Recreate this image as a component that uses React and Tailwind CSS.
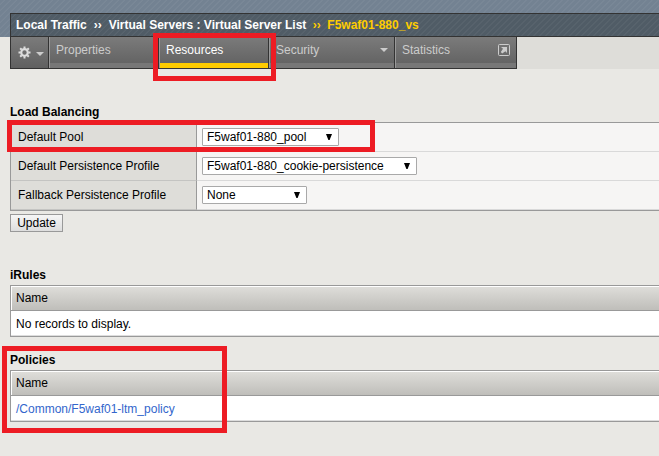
import React from 'react';

const stripes = 'bg-[repeating-linear-gradient(135deg,transparent_0px,transparent_2.4px,rgba(255,255,255,0.05)_3.2px,rgba(255,255,255,0.05)_3.6px,transparent_4.24px)]';

function Select({ width, children }) {
  return (
    <div className={`${width} ml-[5px] flex h-[18px] items-center justify-between rounded-[1px] border border-[#a9a9a9] bg-white pl-1 pr-[5px]`}>
      <span className="whitespace-nowrap">{children}</span>
      <svg width="8" height="8" viewBox="0 0 8 8"><path d="M1 1h6L4.6 7H3.4z" fill="#000" /></svg>
    </div>
  );
}

function Row({ label, children }) {
  return (
    <div className="flex h-[29px]">
      <div className="flex w-[186px] shrink-0 items-center border-r border-b border-r-[#999] border-b-[#c4c4c2] bg-[#deddd9] pl-[7px] whitespace-nowrap">{label}</div>
      <div className="flex grow items-center border-b border-[#d9d9d9] bg-[#f6f5f4]">{children}</div>
    </div>
  );
}

function ListTable({ children }) {
  return (
    <div className="ml-[10px] border-y border-l border-[#999]">
      <div className="flex h-[25px] items-center border-b border-[#999] bg-white pl-px pt-px">
        <div className="flex h-full grow items-center bg-linear-to-b from-[#deddd9] to-[#bfbeba] pb-[2px] pl-1">Name</div>
      </div>
      <div className="flex h-[25px] items-center border-b border-[#ddd] bg-white pl-[5px] pt-[2px]">{children}</div>
    </div>
  );
}

function Gear() {
  return (
    <svg width="13" height="13" viewBox="0 0 13 13" fill="none" stroke="#ddd">
      <circle cx="6.5" cy="6.5" r="3.3" strokeWidth="2.2" />
      <path
        strokeWidth="2"
        d="M6.5 0.5v2M6.5 10.5v2M0.5 6.5h2M10.5 6.5h2M2.2 2.2l1.5 1.5M9.3 9.3l1.5 1.5M2.2 10.8l1.5-1.5M9.3 3.7l1.5-1.5"
      />
    </svg>
  );
}

function Caret() {
  return <svg width="8" height="4" viewBox="0 0 8 4"><path d="M0 0h8L4 4z" fill="#ccc" /></svg>;
}

function Tab({ width, active, icon, children }) {
  return (
    <div className={`${width} flex flex-col border-r border-r-[#333] border-l border-l-[#999]`}>
      <div className={`flex h-[26px] items-center justify-between bg-linear-to-b from-[#7b7b7b] to-[#646464] pl-[6px] pr-[6px] ${active ? 'text-white' : 'text-[#ccc]'}`}>
        <span>{children}</span>
        {icon}
      </div>
      <div className={`h-[5px] ${active ? 'bg-[#fc0]' : 'bg-[#777]'}`} />
    </div>
  );
}

export default function App() {
  return (
    <div className="relative h-[456px] w-[659px] overflow-hidden bg-[#e9e8e4] font-['Liberation_Sans',Arial,sans-serif] text-[12px] leading-[14px] text-black">
      <div className={`flex h-[37px] flex-col bg-[#738292] pl-[10px] pt-[13px] ${stripes}`}>
        <div className={`flex h-[24px] items-center whitespace-pre border-y border-l border-[#333] bg-[#505c66] pl-[5px] font-bold text-white ${stripes}`}>
          <span>Local Traffic</span>
          <span className="w-[22px] text-center">››</span>
          <span>Virtual Servers : Virtual Server List</span>
          <span className="w-[21px] text-center text-[#fc0]">››</span>
          <span className="text-[#fc0]">F5waf01-880_vs</span>
        </div>
      </div>
      <div className="ml-[10px] flex h-8 bg-[#deddd9]">
        <div className="flex border-b border-l border-[#333]">
          <div className="flex w-[38px] items-center gap-[5px] border-r border-[#333] bg-linear-to-b from-[#7b7b7b] to-[#606060] pl-[7px]">
            <Gear />
            <span className="pt-[2px]"><Caret /></span>
          </div>
          <Tab width="w-[110px]">Properties</Tab>
          <Tab width="w-[110px]" active>Resources</Tab>
          <Tab width="w-[126px]" icon={<Caret />}>Security</Tab>
          <Tab
            width="w-[122px]"
            icon={
              <svg width="12" height="12" viewBox="0 0 12 12" fill="none" stroke="#ccc">
                <rect x="0.5" y="0.5" width="11" height="11" rx="1" />
                <path d="M3 3h6v6L7.4 7.2 4.2 9.4 2.8 8 5 4.8z" fill="#ccc" stroke="none" />
              </svg>
            }
          >
            Statistics
          </Tab>
        </div>
      </div>

      <h2 className="mt-[36px] h-[17px] pl-[10px] font-bold">Load Balancing</h2>
      <div className="ml-[10px] border-y border-l border-[#999]">
        <Row label="Default Pool"><Select width="w-[137px]">F5waf01-880_pool</Select></Row>
        <Row label="Default Persistence Profile"><Select width="w-[215px]">F5waf01-880_cookie-persistence</Select></Row>
        <Row label="Fallback Persistence Profile"><Select width="w-[105px]">None</Select></Row>
      </div>
      <button className="ml-[10px] mt-[3px] flex h-[18px] w-[53px] items-center justify-center border border-[#999] bg-linear-to-b from-[#f6f6f6] to-[#dedede]">Update</button>

      <h2 className="mt-[36px] h-[17px] pl-[10px] font-bold">iRules</h2>
      <ListTable>No records to display.</ListTable>
      <h2 className="mt-[16px] h-[17px] pl-[10px] font-bold">Policies</h2>
      <ListTable><a className="text-[#36c]">/Common/F5waf01-ltm_policy</a></ListTable>

      <div className="absolute left-[153px] top-[33px] h-[48px] w-[123px] border-[5px] border-[#ed1c24]" />
      <div className="absolute left-[7px] top-[120px] h-[32px] w-[368px] border-[5px] border-[#ed1c24]" />
      <div className="absolute left-[2px] top-[346px] h-[87px] w-[225px] border-[5px] border-[#ed1c24]" />
    </div>
  );
}
